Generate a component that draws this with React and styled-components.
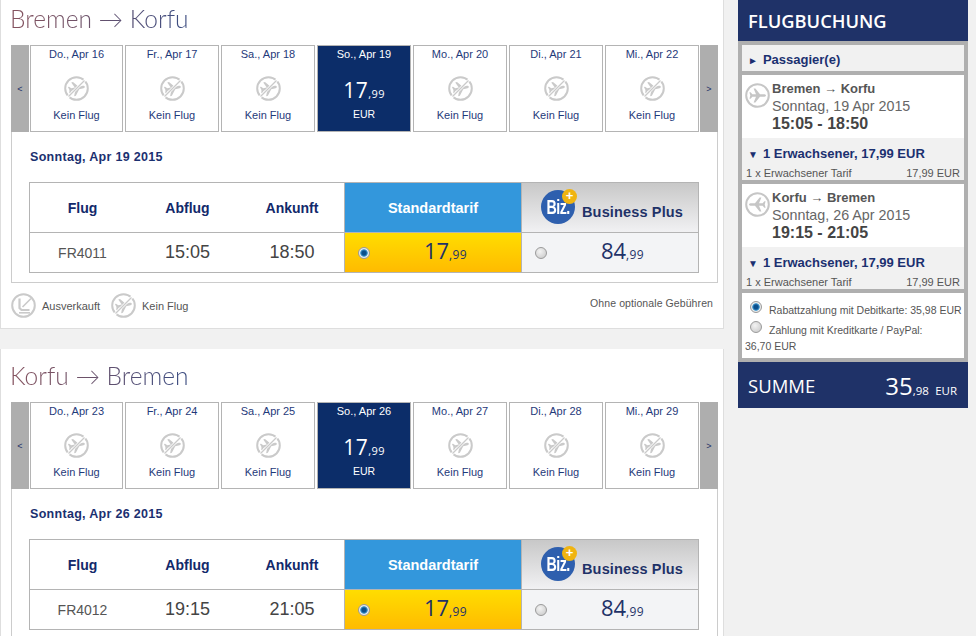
import styled, { createGlobalStyle } from "styled-components";

const GlobalStyle = createGlobalStyle`
  html, body {
    margin: 0;
    padding: 0;
    height: 636px;
    overflow: hidden;
    background: #f1f1f1;
    font-family: "Liberation Sans", Arial, sans-serif;
  }
  * { box-sizing: border-box; }
`;

const Page = styled.div`
  display: flex;
  align-items: flex-start;
  width: 976px;
  height: 636px;
  overflow: hidden;
`;

const Main = styled.div`
  width: 724px;
  display: flex;
  flex-direction: column;
  gap: 20px;
  flex-shrink: 0;
`;

const Panel = styled.section`
  background: #fff;
  border: 1px solid #dedede;
  border-top: none;
  padding: 0 5px 0 10px;
  height: ${(props) => props.$height}px;
  padding-top: ${(props) => props.$top}px;
`;

const Title = styled.h2`
  margin: 0 0 0 -1px;
  height: 41px;
  font-family: Lato, sans-serif;
  font-weight: 300;
  font-size: 24.5px;
  line-height: 30px;
  color: #6b5670;
  background: linear-gradient(90deg, #85525e 0, #6f5268 70px, #3d4c80 170px);
  -webkit-background-clip: text;
  background-clip: text;
  -webkit-text-fill-color: transparent;
`;

const Box = styled.div`
  width: 707px;
  height: 238px;
  border: 1px solid #cccccc;
  border-top: none;
`;

const Carousel = styled.div`
  display: flex;
  height: 87px;
  margin-left: -1px;
  margin-right: -1px;
`;

const Arrow = styled.div`
  width: 18px;
  background: #aeaeae;
  color: #1f3268;
  font-size: 9px;
  display: flex;
  align-items: center;
  justify-content: center;
  flex-shrink: 0;
  margin: ${(props) => props.$margin};
`;

const Days = styled.div`
  display: flex;
  gap: 2px;
`;

const Day = styled.div`
  width: ${(props) => (props.$first ? 93 : 94)}px;
  height: 87px;
  border: 1px solid #b4b4b4;
  background: ${(props) => (props.$active ? "#0c2d69" : "#fff")};
  color: ${(props) => (props.$active ? "#fff" : "#1f3a7a")};
  display: flex;
  flex-direction: column;
  align-items: center;
  font-size: 11px;
  padding-top: 2px;
`;

const DayLabel = styled.div`
  line-height: 12px;
`;

const DayIcon = styled.div`
  margin-top: 16px;
  height: 25px;
`;

const DayNote = styled.div`
  margin-top: 8px;
  line-height: 12px;
`;

const DayPrice = styled.div`
  margin-top: 16px;
  font-family: "Open Sans", sans-serif;
  font-size: 21px;
  line-height: 28px;
  font-weight: 500;
  letter-spacing: 0.5px;
`;

const Cents = styled.span`
  font-size: ${(props) => props.$size || 11}px;
  font-weight: 400;
  letter-spacing: 0.4px;
`;

const DayCurrency = styled.div`
  line-height: 12px;
  font-size: 10.5px;
`;

const DateHeading = styled.div`
  margin: 18px 0 0 18px;
  height: 32px;
  font-size: 12.5px;
  line-height: 14px;
  font-weight: 700;
  color: #1b3070;
  letter-spacing: 0.3px;
`;

const FareTable = styled.div`
  margin-left: 17px;
  width: 670px;
  height: 91px;
  display: grid;
  grid-template-columns: 315px 177px 176px;
  grid-template-rows: 50px 39px;
  border: 1px solid #b4b4b4;
`;

const InfoHead = styled.div`
  display: grid;
  grid-template-columns: 105px 105px 104px;
  align-items: center;
  border-bottom: 1px solid #b4b4b4;
  border-right: 1px solid #b4b4b4;
  text-align: center;
  font-size: 14px;
  font-weight: 700;
  color: #12296b;
`;

const StandardHead = styled.div`
  background: #3397dc;
  color: #fff;
  border-bottom: 1px solid #b4b4b4;
  border-right: 1px solid #b4b4b4;
  font-size: 14.5px;
  font-weight: 700;
  display: flex;
  align-items: center;
  justify-content: center;
`;

const BizHead = styled.div`
  background: linear-gradient(#c8c8c8, #f1f1f3);
  border-bottom: 1px solid #b4b4b4;
  display: flex;
  align-items: flex-start;
  padding: 7px 0 0 19px;
  font-size: 14.5px;
  font-weight: 700;
  color: #1f3268;
  letter-spacing: 0.15px;
`;

const BizLogo = styled.div`
  position: relative;
  width: 34px;
  height: 34px;
  border-radius: 50%;
  background: #2e5fae;
  color: #fff;
  text-align: center;
  margin-right: 7px;
  flex-shrink: 0;
`;

const BizMark = styled.span`
  display: inline-block;
  font-size: 21px;
  line-height: 34px;
  letter-spacing: -0.8px;
  transform: scaleX(0.68);
  transform-origin: center;
`;

const BizPlus = styled.span`
  position: absolute;
  top: -1px;
  left: 21px;
  width: 15px;
  height: 15px;
  border-radius: 50%;
  background: #f0b411;
  font-size: 13px;
  line-height: 14px;
  letter-spacing: 0;
  text-align: center;
`;

const BizLabel = styled.span`
  margin-top: 14px;
  line-height: 16px;
`;

const InfoRow = styled.div`
  display: grid;
  grid-template-columns: 105px 105px 104px;
  align-items: center;
  border-right: 1px solid #b4b4b4;
  text-align: center;
  color: #444;
  font-size: 18px;
`;

const FlightNo = styled.span`
  font-size: 14px;
  color: #555;
`;

const PriceCell = styled.div`
  display: flex;
  align-items: center;
  padding-left: 13px;
  background: ${(props) => props.$bg};
  border-right: ${(props) => (props.$divider ? "1px solid #b4b4b4" : "none")};
`;

const PriceValue = styled.div`
  flex: 1;
  text-align: center;
  font-family: "Open Sans", sans-serif;
  font-size: 22px;
  line-height: 28px;
  color: #1f3268;
`;

const Radio = styled.span`
  display: inline-block;
  width: 12px;
  height: 12px;
  border-radius: 50%;
  border: 1px solid #9a9a9a;
  flex-shrink: 0;
  background: ${(props) =>
    props.$checked
      ? "radial-gradient(circle, #0b4f8c 0 28%, #3f98d0 48%, #eeeeee 58%, #d4d4d4 100%)"
      : "radial-gradient(circle at 40% 35%, #f3f3f3, #c6c6c6)"};
`;

const Legend = styled.div`
  display: flex;
  align-items: center;
  height: 45px;
  margin-right: 5px;
  font-size: 11px;
  color: #555;
`;

const LegendIcon = styled.div`
  height: 25px;
  margin-right: 6px;
`;

const LegendLabel = styled.span`
  width: ${(props) => props.$width}px;
`;

const LegendNote = styled.span`
  margin-left: auto;
  margin-top: -5px;
  font-size: 10.5px;
  letter-spacing: 0.09px;
`;

const Sidebar = styled.aside`
  width: 230px;
  margin-left: 14px;
  background: #afafaf;
  flex-shrink: 0;
`;

const SideHeader = styled.div`
  height: 41px;
  background: #1f3268;
  color: #fff;
  font-family: "Open Sans", sans-serif;
  font-weight: 600;
  font-size: 18.3px;
  line-height: 41px;
  padding-left: 10px;
`;

const SideBody = styled.div`
  display: flex;
  flex-direction: column;
  gap: 4px;
  padding: 4px;
`;

const Passengers = styled.div`
  height: 26px;
  background: #f1f1f1;
  color: #1b3070;
  font-size: 13px;
  font-weight: 700;
  line-height: 30px;
  padding-left: 6px;
`;

const Marker = styled.span`
  font-size: 10px;
  margin-right: 5px;
`;

const FlightCard = styled.div`
  background: #f1f1f1;
`;

const FlightSummary = styled.div`
  height: 63px;
  background: #fff;
  display: flex;
  padding: 5px 0 0 3px;
`;

const SideIcon = styled.div`
  width: 27px;
  flex-shrink: 0;
  padding-top: 3px;
`;

const Route = styled.div`
  font-size: 13px;
  line-height: 17px;
  font-weight: 700;
  color: #555;
`;

const FlightDate = styled.div`
  font-size: 14.3px;
  line-height: 18px;
  color: #666;
`;

const FlightTime = styled.div`
  font-size: 16px;
  line-height: 17px;
  font-weight: 700;
  color: #444;
`;

const FareLine = styled.div`
  height: 42px;
  padding: 8px 4px 0 6px;
`;

const FareTitle = styled.div`
  font-size: 13px;
  line-height: 15px;
  font-weight: 700;
  color: #1b3070;
`;

const FareDetail = styled.div`
  display: flex;
  justify-content: space-between;
  margin: 5px 0 0 -2px;
  font-size: 11px;
  line-height: 12px;
  color: #555;
`;

const Payment = styled.div`
  height: 65px;
  background: #fff;
  padding: 8px 0 0 3px;
  font-size: 10.5px;
  line-height: 14px;
  color: #555;
`;

const PayOption = styled.div`
  display: flex;
  align-items: flex-start;
  padding-left: 5px;
  height: 20px;
`;

const PayLabel = styled.span`
  margin-left: 7px;
  margin-top: 2px;
  white-space: nowrap;
`;

const PayAmount = styled.div`
  margin-top: -2px;
`;

const Total = styled.div`
  height: 46px;
  background: #1f3268;
  color: #fff;
  display: flex;
  align-items: center;
  justify-content: space-between;
  padding: 0 11px 0 10px;
  font-family: "Open Sans", sans-serif;
  font-size: 18.5px;
`;

const TotalValue = styled.span`
  font-size: 24px;
`;

const TotalCents = styled(Cents)`
  font-size: 11.5px;
  letter-spacing: 0;
`;

const planePath =
  "M21 12.5c0-.9-1.2-1.3-2.6-1.3H15L10.4 5.500H8.600L11 11.200H7.400L5.600 9.300H4.400l.9 3.200-.9 3.200h1.200l1.800-1.900H11L8.600 19.500h1.800L15 13.800h3.400c1.400 0 2.600-.4 2.600-1.300z";

const StrikePlane = () => (
  <svg width="25" height="25" viewBox="0 0 25 25" fill="none">
    <circle cx="12.5" cy="12.5" r="11.3" stroke="#cacaca" strokeWidth="2" />
    <path d={planePath} fill="#cacaca" transform="rotate(-12 12.5 12.5)" />
    <path d="M21.5 3.500L3.500 21.500" stroke="#fff" strokeWidth="2.6" />
    <path d="M20.5 4.500L4.500 20.500" stroke="#cacaca" strokeWidth="1.3" />
  </svg>
);

const SoldOut = () => (
  <svg width="25" height="25" viewBox="0 0 25 25" fill="none">
    <circle cx="12.5" cy="12.5" r="11.3" stroke="#cacaca" strokeWidth="2" />
    <path d="M8.500 5.500v9.500l2 2h8" stroke="#cacaca" strokeWidth="2.2" />
    <path d="M20 5.500l-8.500 8.500" stroke="#cacaca" strokeWidth="1.6" />
    <path d="M8 19.800h11" stroke="#cacaca" strokeWidth="1.6" />
  </svg>
);

const CirclePlane = ({ back }) => (
  <svg width="25" height="25" viewBox="0 0 25 25" fill="none">
    <circle cx="12.5" cy="12.5" r="11.3" stroke="#c6c6c6" strokeWidth="2" />
    <path d={planePath} fill="#c6c6c6" transform={back ? "matrix(-1 0 0 1 25 0)" : undefined} />
  </svg>
);

const Price = ({ whole, cents, size }) => (
  <>
    {whole}
    <Cents $size={size}>,{cents}</Cents>
  </>
);

const journeys = [
  {
    from: "Bremen",
    to: "Korfu",
    heading: "Sonntag, Apr 19 2015",
    flight: "FR4011",
    dep: "15:05",
    arr: "18:50",
    days: ["Do., Apr 16", "Fr., Apr 17", "Sa., Apr 18", "So., Apr 19", "Mo., Apr 20", "Di., Apr 21", "Mi., Apr 22"],
  },
  {
    from: "Korfu",
    to: "Bremen",
    heading: "Sonntag, Apr 26 2015",
    flight: "FR4012",
    dep: "19:15",
    arr: "21:05",
    days: ["Do., Apr 23", "Fr., Apr 24", "Sa., Apr 25", "So., Apr 26", "Mo., Apr 27", "Di., Apr 28", "Mi., Apr 29"],
  },
];

const Journey = ({ journey, legend, height, top }) => (
  <Panel $height={height} $top={top}>
    <Title>
      {journey.from} → {journey.to}
    </Title>
    <Box>
      <Carousel>
        <Arrow $margin="0 1px 0 0">&lt;</Arrow>
        <Days>
          {journey.days.map((day, i) =>
            i === 3 ? (
              <Day key={day} $active>
                <DayLabel>{day}</DayLabel>
                <DayPrice>
                  <Price whole="17" cents="99" />
                </DayPrice>
                <DayCurrency>EUR</DayCurrency>
              </Day>
            ) : (
              <Day key={day} $first={i === 0}>
                <DayLabel>{day}</DayLabel>
                <DayIcon>
                  <StrikePlane />
                </DayIcon>
                <DayNote>Kein Flug</DayNote>
              </Day>
            )
          )}
        </Days>
        <Arrow $margin="0 0 0 1px">&gt;</Arrow>
      </Carousel>
      <DateHeading>{journey.heading}</DateHeading>
      <FareTable>
        <InfoHead>
          <span>Flug</span>
          <span>Abflug</span>
          <span>Ankunft</span>
        </InfoHead>
        <StandardHead>Standardtarif</StandardHead>
        <BizHead>
          <BizLogo>
            <BizMark>Biz.</BizMark>
            <BizPlus>+</BizPlus>
          </BizLogo>
          <BizLabel>Business Plus</BizLabel>
        </BizHead>
        <InfoRow>
          <FlightNo>{journey.flight}</FlightNo>
          <span>{journey.dep}</span>
          <span>{journey.arr}</span>
        </InfoRow>
        <PriceCell $bg="linear-gradient(#ffdd00, #ffbb00)" $divider>
          <Radio $checked />
          <PriceValue>
            <Price whole="17" cents="99" size={12} />
          </PriceValue>
        </PriceCell>
        <PriceCell $bg="#f3f4f6">
          <Radio />
          <PriceValue>
            <Price whole="84" cents="99" size={12} />
          </PriceValue>
        </PriceCell>
      </FareTable>
    </Box>
    {legend && (
      <Legend>
        <LegendIcon>
          <SoldOut />
        </LegendIcon>
        <LegendLabel $width={69}>Ausverkauft</LegendLabel>
        <LegendIcon>
          <StrikePlane />
        </LegendIcon>
        <LegendLabel $width={60}>Kein Flug</LegendLabel>
        <LegendNote>Ohne optionale Gebühren</LegendNote>
      </Legend>
    )}
  </Panel>
);

const legs = [
  { route: "Bremen → Korfu", date: "Sonntag, 19 Apr 2015", time: "15:05 - 18:50" },
  { route: "Korfu → Bremen", date: "Sonntag, 26 Apr 2015", time: "19:15 - 21:05", back: true },
];

export default function App() {
  return (
    <Page>
      <GlobalStyle />
      <Main>
        <Journey journey={journeys[0]} legend height={329} top={4} />
        <Journey journey={journeys[1]} height={320} top={12} />
      </Main>
      <Sidebar>
        <SideHeader>FLUGBUCHUNG</SideHeader>
        <SideBody>
          <Passengers>
            <Marker>►</Marker>Passagier(e)
          </Passengers>
          {legs.map((leg) => (
            <FlightCard key={leg.route}>
              <FlightSummary>
                <SideIcon>
                  <CirclePlane back={leg.back} />
                </SideIcon>
                <div>
                  <Route>{leg.route}</Route>
                  <FlightDate>{leg.date}</FlightDate>
                  <FlightTime>{leg.time}</FlightTime>
                </div>
              </FlightSummary>
              <FareLine>
                <FareTitle>
                  <Marker>▼</Marker>1 Erwachsener, 17,99 EUR
                </FareTitle>
                <FareDetail>
                  <span>1 x Erwachsener Tarif</span>
                  <span>17,99 EUR</span>
                </FareDetail>
              </FareLine>
            </FlightCard>
          ))}
          <Payment>
            <PayOption>
              <Radio $checked />
              <PayLabel>Rabattzahlung mit Debitkarte: 35,98 EUR</PayLabel>
            </PayOption>
            <PayOption>
              <Radio />
              <PayLabel>Zahlung mit Kreditkarte / PayPal:</PayLabel>
            </PayOption>
            <PayAmount>36,70 EUR</PayAmount>
          </Payment>
        </SideBody>
        <Total>
          SUMME
          <TotalValue>
            35<TotalCents>,98</TotalCents> <TotalCents>EUR</TotalCents>
          </TotalValue>
        </Total>
      </Sidebar>
    </Page>
  );
}
